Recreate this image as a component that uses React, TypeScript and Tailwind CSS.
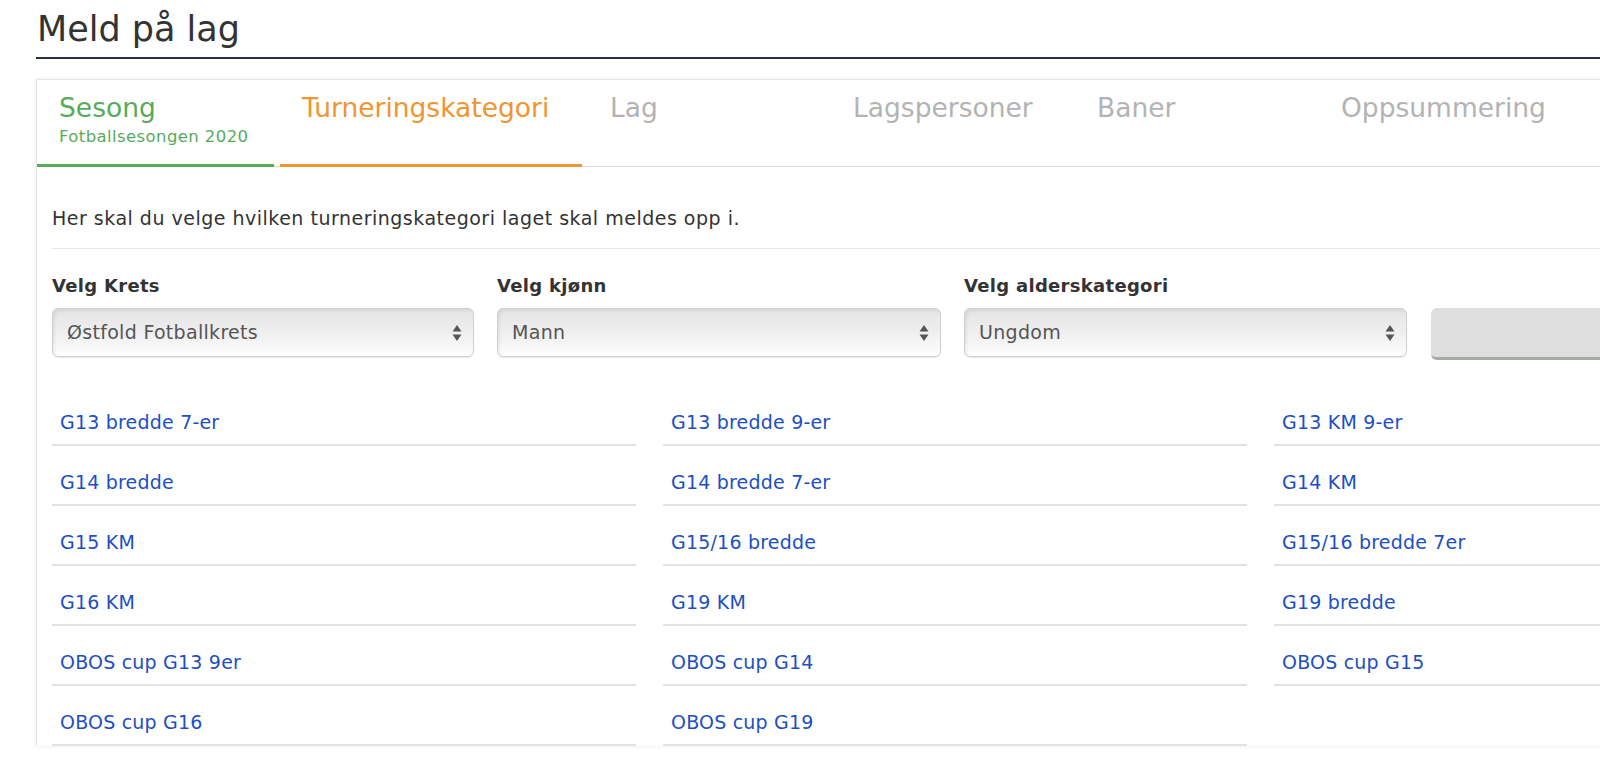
const tabs = [
  { title: 'Sesong', sub: 'Fotballsesongen 2020', state: 'done', w: 'w-[237px]' },
  { title: 'Turneringskategori', sub: '', state: 'active', w: 'w-[302px]' },
  { title: 'Lag', sub: '', state: 'todo', w: 'w-[237px]' },
  { title: 'Lagspersoner', sub: '', state: 'todo', w: 'w-[238px]' },
  { title: 'Baner', sub: '', state: 'todo', w: 'w-[238px]' },
  { title: 'Oppsummering', sub: '', state: 'todo', w: 'w-[280px]' },
];

const categories = [
  'G13 bredde 7-er', 'G13 bredde 9-er', 'G13 KM 9-er',
  'G14 bredde', 'G14 bredde 7-er', 'G14 KM',
  'G15 KM', 'G15/16 bredde', 'G15/16 bredde 7er',
  'G16 KM', 'G19 KM', 'G19 bredde',
  'OBOS cup G13 9er', 'OBOS cup G14', 'OBOS cup G15',
  'OBOS cup G16', 'OBOS cup G19',
];

function Arrows() {
  return (
    <svg width="10" height="20" viewBox="0 0 10 20" className="shrink-0">
      <path d="M5 2 L9.5 8.5 L0.5 8.5 Z" fill="#555" />
      <path d="M5 18 L9.5 11.5 L0.5 11.5 Z" fill="#555" />
    </svg>
  );
}

function SelectBox({ label, value, w }: { label: string; value: string; w: string }) {
  return (
    <div className={w}>
      <div className="text-[18px] tracking-[0.3px] font-bold text-[#333] mb-[11px] leading-[22px]">{label}</div>
      <div className="h-[49px] rounded-[6px] border border-[#cfcfcf] bg-gradient-to-b from-[#e4e4e4] via-[#efefef] to-[#fdfdfd] shadow-[inset_2px_2px_3px_rgba(0,0,0,0.06),0_1px_1px_rgba(0,0,0,0.08)] flex items-center justify-between pl-[14px] pr-[11px]">
        <span className="text-[19px] tracking-[0.3px] text-[#555]">{value}</span>
        <Arrows />
      </div>
    </div>
  );
}

export default function App() {
  return (
    <div className="w-[1600px] h-[777px] overflow-hidden bg-white" style={{ fontFamily: '"DejaVu Sans", "Noto Sans", sans-serif' }}>
      <div className="w-[1900px] pl-[36px]">
        {/* Heading */}
        <div className="h-[59px] border-b-2 border-[#2b3044] flex items-end pb-[7px]">
          <h1 className="text-[35px] leading-[42px] text-[#333] pl-[1px]">Meld på lag</h1>
        </div>

        {/* Card */}
        <div className="mt-[20px] border-l border-t border-[#e6e6e6] shadow-[0_0_4px_rgba(0,0,0,0.08)]">
          {/* Steps */}
          <div className="flex gap-[6px] border-b border-[#dcdcdc] h-[87px]">
            {tabs.map((t) => (
              <div
                key={t.title}
                className={`${t.w} h-[87px] pl-[22px] pt-[11px] border-b-[3px] ${
                  t.state === 'done' ? 'border-[#5aaa5c]' : t.state === 'active' ? 'border-[#f0952f]' : 'border-transparent'
                }`}
              >
                <div
                  className={`text-[26.5px] leading-[34px] ${
                    t.state === 'done' ? 'text-[#5aaa5c]' : t.state === 'active' ? 'text-[#f0952f]' : 'text-[#b3b3b3]'
                  }`}
                >
                  {t.title}
                </div>
                {t.sub && <div className="text-[16.5px] tracking-[0.4px] leading-[24px] text-[#5aaa5c]">{t.sub}</div>}
              </div>
            ))}
          </div>

          {/* Body */}
          <div className="px-[15px]">
            <p className="pt-[39px] pb-[18px] text-[19px] tracking-[0.5px] leading-[24px] text-[#333] border-b border-[#e8e8e8]">
              Her skal du velge hvilken turneringskategori laget skal meldes opp i.
            </p>

            <div className="flex items-end mt-[26px]">
              <SelectBox label="Velg Krets" value="Østfold Fotballkrets" w="w-[422px]" />
              <div className="w-[23px]" />
              <SelectBox label="Velg kjønn" value="Mann" w="w-[444px]" />
              <div className="w-[23px]" />
              <SelectBox label="Velg alderskategori" value="Ungdom" w="w-[443px]" />
              <div className="w-[24px]" />
              <button className="w-[300px] h-[52px] rounded-[6px] bg-[#dedede] border-b-[3px] border-[#a3aca3] mb-[-3px]" />
            </div>

            <div className="grid grid-cols-[584px_584px_584px] gap-x-[27px] mt-[29px]">
              {categories.map((c) => (
                <a
                  key={c}
                  href="#"
                  className="h-[60px] flex items-end pb-[10px] pl-[8px] text-[19px] tracking-[0.2px] leading-[24px] text-[#1d4fc2] border-b-2 border-[#e2e2e2]"
                >
                  {c}
                </a>
              ))}
            </div>
          </div>
        </div>
      </div>
    </div>
  );
}
